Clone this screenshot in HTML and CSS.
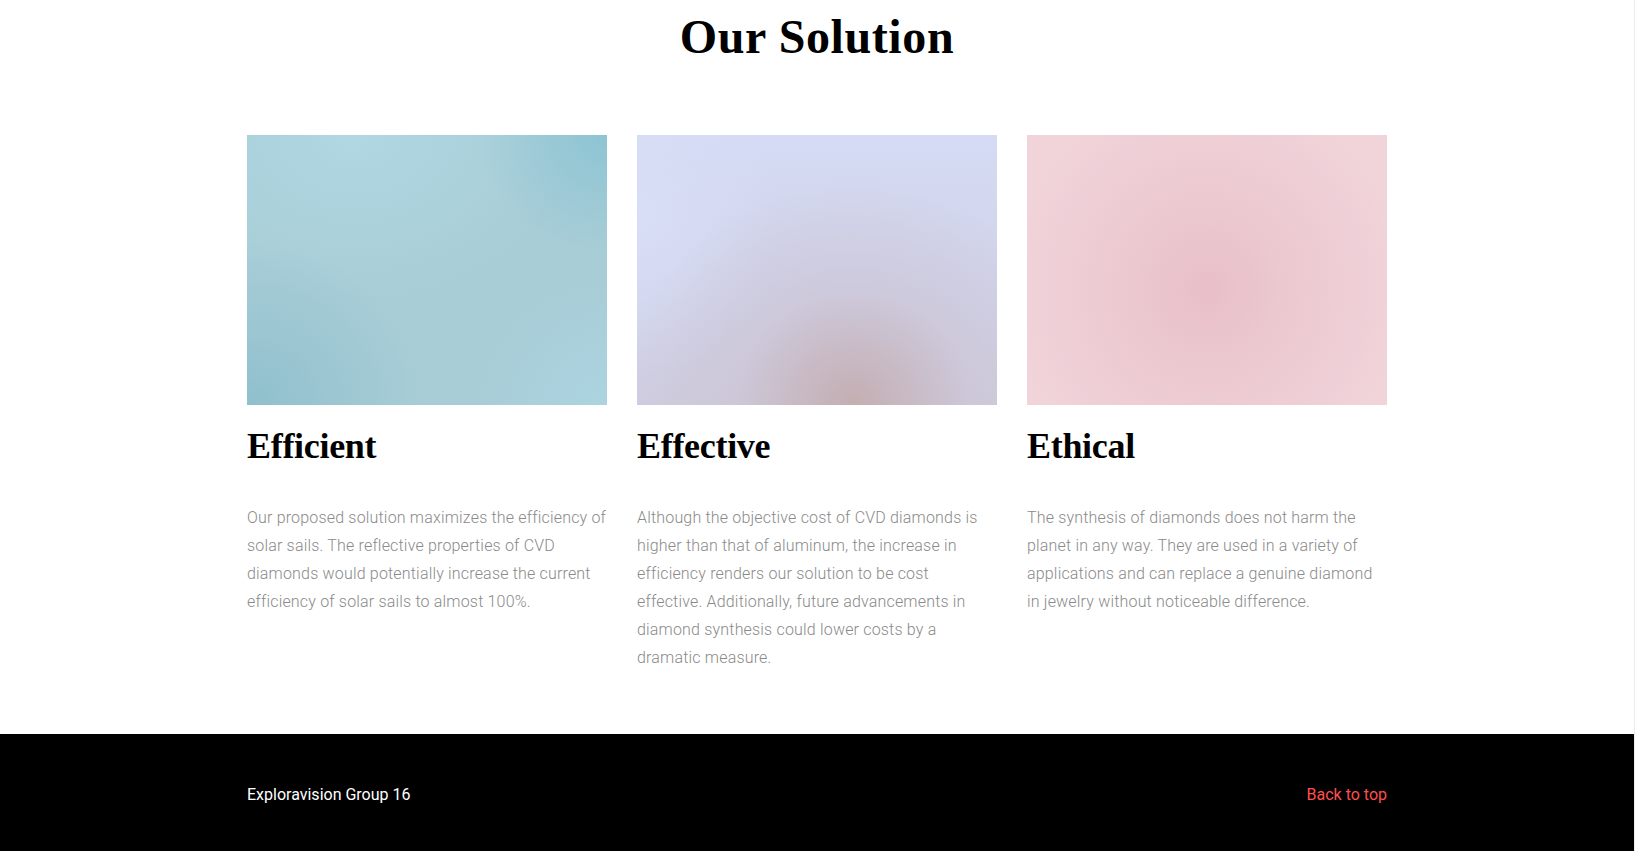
FILE: index.html
```html
<!DOCTYPE html>
<html lang="en">
<head>
<meta charset="utf-8">
<title>Our Solution</title>
<link rel="stylesheet" href="styles.css">
</head>
<body>
<div class="page">
  <section class="solution">
    <h1 class="section-title">Our Solution</h1>
    <div class="container">
      <div class="cards">
        <article class="card">
          <div class="card-image img-blue"></div>
          <h2 class="card-title">Efficient</h2>
          <p class="card-text">Our proposed solution maximizes the efficiency of<br>solar sails. The reflective properties of CVD<br>diamonds would potentially increase the current<br>efficiency of solar sails to almost 100%.</p>
        </article>
        <article class="card">
          <div class="card-image img-lavender"></div>
          <h2 class="card-title">Effective</h2>
          <p class="card-text">Although the objective cost of CVD diamonds is<br>higher than that of aluminum, the increase in<br>efficiency renders our solution to be cost<br>effective. Additionally, future advancements in<br>diamond synthesis could lower costs by a<br>dramatic measure.</p>
        </article>
        <article class="card">
          <div class="card-image img-pink"></div>
          <h2 class="card-title">Ethical</h2>
          <p class="card-text">The synthesis of diamonds does not harm the<br>planet in any way. They are used in a variety of<br>applications and can replace a genuine diamond<br>in jewelry without noticeable difference.</p>
        </article>
      </div>
    </div>
  </section>
  <footer class="footer">
    <div class="container footer-row">
      <span class="footer-brand">Exploravision Group 16</span>
      <a class="footer-link" href="#">Back to top</a>
    </div>
  </footer>
</div>
</body>
</html>
```

FILE: styles.css
```css
html {
  background: #ececec;
}
body {
  margin: 0;
  font-family: Roboto, "Liberation Sans", Arial, sans-serif;
}
.page {
  margin-right: 1px;
  background: #fff;
}
.solution {
  padding: 8px 0 62px;
}
.section-title {
  margin: 0;
  text-align: center;
  font-family: "Liberation Serif", "Times New Roman", serif;
  font-weight: 700;
  font-size: 48px;
  line-height: 58px;
  letter-spacing: 0.6px;
  color: #000;
}
.container {
  width: 1140px;
  margin: 0 auto;
}
.cards {
  margin-top: 69px;
  display: grid;
  grid-template-columns: repeat(3, 360px);
  column-gap: 30px;
}
.card-image {
  height: 270px;
}
.img-blue {
  background:
    radial-gradient(ellipse 35% 45% at 100% 0%, rgba(140, 196, 211, 0.95), rgba(140, 196, 211, 0) 100%),
    radial-gradient(ellipse 50% 60% at 0% 100%, rgba(141, 190, 204, 0.9), rgba(141, 190, 204, 0) 100%),
    radial-gradient(ellipse 35% 45% at 100% 100%, rgba(172, 212, 226, 0.9), rgba(172, 212, 226, 0) 100%),
    radial-gradient(ellipse 60% 60% at 30% 0%, rgba(176, 215, 226, 1), rgba(176, 215, 226, 0) 100%),
    #a8cdd7;
}
.img-lavender {
  background:
    radial-gradient(ellipse 65% 85% at 60% 100%, rgba(196, 174, 178, 1) 0%, rgba(204, 196, 212, 0.65) 50%, rgba(210, 214, 236, 0) 100%),
    radial-gradient(ellipse 40% 60% at 0% 30%, rgba(216, 222, 246, 1), rgba(216, 222, 246, 0) 100%),
    linear-gradient(180deg, #d5dbf4 0%, #d0d3ea 60%, #cfcde0 100%);
}
.img-pink {
  background:
    radial-gradient(ellipse 55% 75% at 50% 57%, #e8bfc9 0%, #ecc9d1 45%, #f1d3da 100%);
}
.card-title {
  margin: 20px 0 0;
  font-family: "Liberation Serif", "Times New Roman", serif;
  font-weight: 700;
  font-size: 36px;
  line-height: 43px;
  letter-spacing: -0.3px;
  color: #000;
}
.card-text {
  margin: 36px 0 0;
  font-family: Roboto, "Liberation Sans", Arial, sans-serif;
  font-weight: 300;
  font-size: 16px;
  line-height: 28px;
  letter-spacing: 0.18px;
  color: #8a8a8a;
}
.footer {
  background: #000;
  padding: 49px 0 45px;
}
.footer-row {
  display: flex;
  justify-content: space-between;
  align-items: baseline;
  font-size: 16px;
  line-height: 24px;
}
.footer-brand {
  color: #fff;
}
.footer-link {
  color: #ff4f4f;
  text-decoration: none;
}
```
